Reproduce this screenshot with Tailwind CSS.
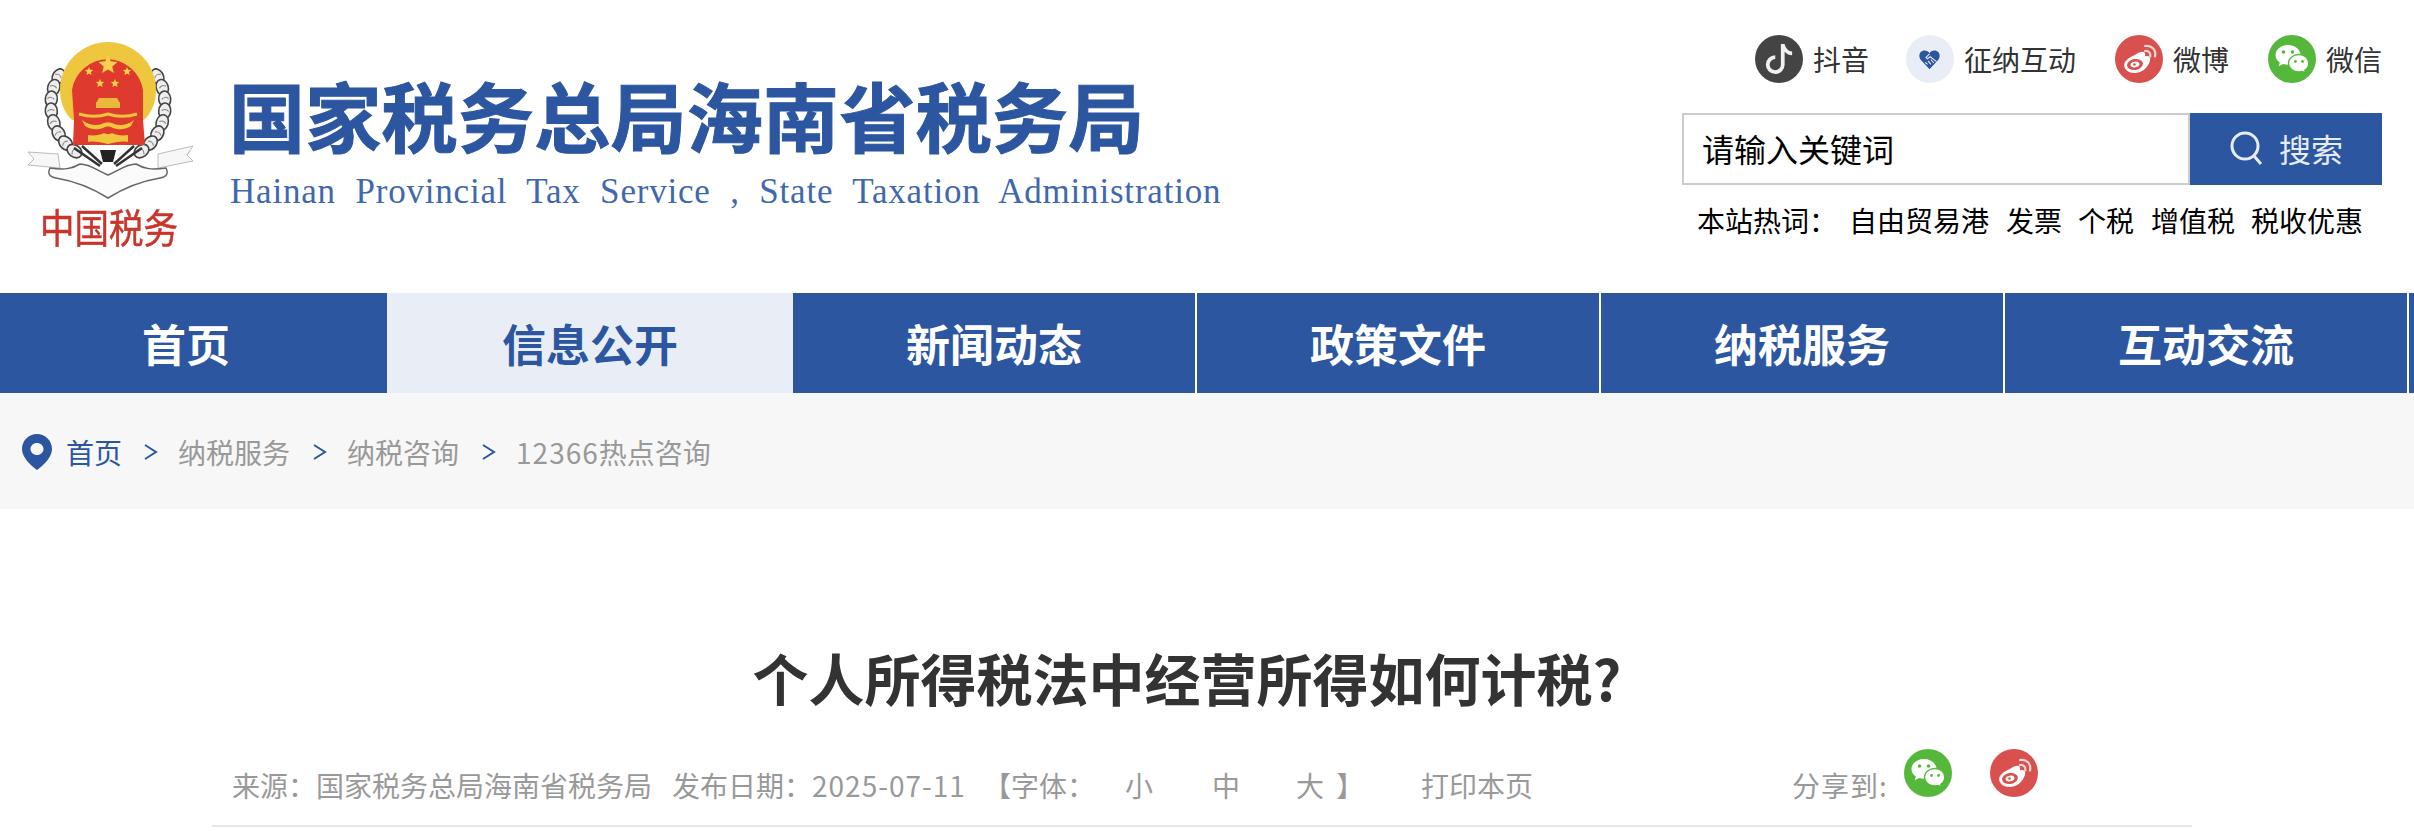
<!DOCTYPE html>
<html lang="en">
<head>
    <meta charset="UTF-8">
    <title>个人所得税法中经营所得如何计税?</title>
    <script src="https://cdn.jsdelivr.net/npm/@tailwindcss/browser@4"></script>
</head>
<body class="bg-white h-[831px] overflow-hidden font-['Noto_Sans_CJK_SC','Liberation_Sans',sans-serif]">
    <!-- shared icons -->
    <svg class="hidden" xmlns="http://www.w3.org/2000/svg">
        <symbol id="icon-weibo" viewBox="0 0 48 48">
            <circle cx="24" cy="24" r="24" fill="#d9514f"/>
            <path d="M20 20c4-3 8-4 9.500-2.500 1 1 .8 2.500.2 4 3-1 5.500-.2 5.500 2.500 0 5-6.500 14-15 14-7 0-11-3.500-11-8 0-3.500 4-7.500 10.800-10z" fill="#fff"/>
            <ellipse cx="20" cy="29.500" rx="8" ry="5.500" fill="#d9514f" transform="rotate(-10 20 29.500)"/>
            <ellipse cx="20" cy="29.500" rx="4.500" ry="2.800" fill="#fff" transform="rotate(-10 20 29.500)"/>
            <circle cx="19.500" cy="29.500" r="1.300" fill="#d9514f"/>
            <path d="M30 16c3.500-.8 6 2 5.200 5.500M30 11c6.500-1.200 11.500 4 10 10.500" fill="none" stroke="#f8d5d4" stroke-width="2.200" stroke-linecap="round"/>
        </symbol>
        <symbol id="icon-wechat" viewBox="0 0 48 48">
            <circle cx="24" cy="24" r="24" fill="#55b83a"/>
            <path d="M20 10c-7 0-12.500 4.500-12.500 10 0 3 1.500 5.500 4.300 7.500l-1 3.800 4.200-2.300c1.700.5 3.300.8 5 .8 7 0 12.500-4.500 12.500-9.800S27 10 20 10z" fill="#fff"/>
            <circle cx="15.500" cy="17" r="1.800" fill="#55b83a"/>
            <circle cx="24.500" cy="17" r="1.800" fill="#55b83a"/>
            <path d="M31 19.500c-5.800 0-10.500 3.800-10.500 8.700s4.700 8.700 10.500 8.700c1.300 0 2.400-.2 3.500-.5l3 1.800-.8-3c2.500-1.600 4-4.200 4-7 0-4.900-4.200-8.700-9.700-8.700z" fill="#fff" stroke="#55b83a" stroke-width="1.300"/>
            <circle cx="27.500" cy="26.500" r="1.400" fill="#55b83a"/>
            <circle cx="34.500" cy="26.500" r="1.400" fill="#55b83a"/>
        </symbol>
    </svg>

    <header class="h-[293px] flex justify-between">
        <div class="flex">
            <!-- emblem -->
            <svg class="ml-[20px] mt-[35px] w-[180px] h-[225px] shrink-0 blur-[0.4px]" viewBox="20 35 180 225" xmlns="http://www.w3.org/2000/svg">
                <defs>
                    <g id="leaf">
                        <ellipse cx="51" cy="105" rx="6" ry="8" fill="#eeeeee" stroke="#444" stroke-width="1.600"/>
                        <path d="M47 105c2-2 5-2 7 0" fill="none" stroke="#888" stroke-width="1.200"/>
                    </g>
                    <g id="wreath-side">
                        <use href="#leaf" transform="rotate(30 108 105)"/>
                        <use href="#leaf" transform="rotate(18 108 105)"/>
                        <use href="#leaf" transform="rotate(6 108 105)"/>
                        <use href="#leaf" transform="rotate(-6 108 105)"/>
                        <use href="#leaf" transform="rotate(-18 108 105)"/>
                        <use href="#leaf" transform="rotate(-30 108 105)"/>
                        <use href="#leaf" transform="rotate(-42 108 105)"/>
                        <use href="#leaf" transform="rotate(-54 108 105)"/>
                        <path d="M74 148l26 18M82 146l20 18" stroke="#333" stroke-width="2.500"/>
                    </g>
                </defs>
                <path d="M58 154L28 152l6 7-6 6 32 3zM158 154l35-8-6 9 6 6-35 7z" fill="#f7f7f7" stroke="#bbb" stroke-width="1"/>
                <use href="#wreath-side"/>
                <use href="#wreath-side" transform="translate(216 0) scale(-1 1)"/>
                <path d="M50 168c-3 6 0 9 6 10 18 3 36 10 52 20 16-10 34-17 52-20 6-1 9-4 6-10-14 2-22 1-30-4-10 0-18 7-28 11-10-4-18-11-28-11-8 5-16 6-30 4z" fill="#fbfbfb" stroke="#666" stroke-width="1.500"/>
                <path d="M100 150h16l-3 12h-10z" fill="#222"/>
                <path d="M60 90a48 48 0 0 1 96 0c0 12-4 22-12 30l-72 0c-8-8-12-18-12-30z" fill="#efc73f"/>
                <path d="M72 90a36 37 0 0 1 71 0v30l2 25H73l1-25z" fill="#de3a2e"/>
                <path d="M108 55l2.700 6.300 6.800.6-5.200 4.500 1.600 6.600-5.900-3.500-5.900 3.500 1.600-6.600-5.200-4.500 6.800-.6z" fill="#f7d24a"/>
                <path d="M89 67l1.200 2.800 3 .3-2.300 2 .7 3-2.600-1.600-2.600 1.600.7-3-2.300-2 3-.3zM127 67l1.200 2.800 3 .3-2.300 2 .7 3-2.600-1.600-2.600 1.600.7-3-2.300-2 3-.3zM100 79l1.200 2.800 3 .3-2.300 2 .7 3-2.600-1.600-2.600 1.600.7-3-2.300-2 3-.3zM115 79l1.200 2.800 3 .3-2.300 2 .7 3-2.600-1.600-2.600 1.600.7-3-2.300-2 3-.3z" fill="#f7d24a"/>
                <path d="M99 98h18l3 5v5H96v-5z" fill="#e8b93c"/>
                <path d="M79 114c10 3 20 3 29 0 9 3 19 3 29 0" fill="none" stroke="#f1c63d" stroke-width="3"/>
                <path d="M82 120c6 5 14 6 20 4 2-2 10-2 12 0 6 2 14 1 20-4l-3 6c-6 4-13 4-18 2-4-2-6-2-10 0-5 2-12 2-18-2z" fill="#f1c63d"/>
                <path d="M88 135c6 1 12 0 16-2 2 1.500 6 1.500 8 0 4 2 10 3 16 2v7c-6-1-12 0-20 2-8-2-14-3-20-2z" fill="#f1c63d"/>
                <text x="40" y="243" textLength="138" lengthAdjust="spacingAndGlyphs" font-size="40" fill="#c9352c" stroke="#c9352c" stroke-width=".5">中国税务</text>
            </svg>
            <div class="ml-[29px]">
                <h2 class="mt-[66px] h-[96px] flex items-center text-[76px] leading-none tracking-[0.3px] font-bold text-[#2c56a0] [-webkit-text-stroke:1px_#2c56a0]">国家税务总局海南省税务局</h2>
                <p class="mt-[10px] ml-[1px] text-[35px] leading-[40px] tracking-[0.8px] [word-spacing:10px] whitespace-nowrap text-[#3f68ae] font-['Liberation_Serif',serif]">Hainan Provincial Tax Service , State Taxation Administration</p>
            </div>
        </div>

        <div class="w-[700px] pr-[32px] flex flex-col items-end">
            <div class="mt-[35px] h-[48px] flex items-center text-[28px] text-[#333]">
                <span class="w-[48px] h-[48px] rounded-full bg-[#444] flex items-center justify-center">
                    <svg class="w-[30px] h-[30px]" viewBox="0 0 16 16" fill="#f0f0f0"><path d="M9 0h1.980c.144.715.540 1.617 1.235 2.512C12.895 3.389 13.797 4 15 4v2c-1.753 0-3.070-.814-4-1.829V11a5 5 0 1 1-5-5v2a3 3 0 1 0 3 3V0Z"/></svg>
                </span>
                <span class="ml-[10px]">抖音</span>
                <span class="ml-[37px] w-[48px] h-[48px] rounded-full bg-[#e9eef6] flex items-center justify-center">
                    <svg class="w-[23px] h-[21px]" viewBox="0 0 32 30">
                        <path d="M16 29L4 16C-1 10 2 2 9 2c3 0 5.500 1.500 7 4 1.500-2.500 4-4 7-4 7 0 10 8 5 14z" fill="#2c56a0"/>
                        <path d="M16 7l-5 5 2 2 4-3 9 7M10 19l3 3M14 17l4 5M18 15l4 5" fill="none" stroke="#e9eef6" stroke-width="1.600"/>
                    </svg>
                </span>
                <span class="ml-[10px]">征纳互动</span>
                <svg class="ml-[39px] w-[48px] h-[48px]"><use href="#icon-weibo"/></svg>
                <span class="ml-[10px]">微博</span>
                <svg class="ml-[39px] w-[48px] h-[48px]"><use href="#icon-wechat"/></svg>
                <span class="ml-[10px]">微信</span>
            </div>
            <form class="mt-[30px] w-[700px] h-[72px] flex">
                <div class="w-[508px] border-2 border-[#cccccc] pl-[18px] pb-[2px] flex items-center text-[32px] text-black">请输入关键词</div>
                <button type="button" class="w-[192px] bg-[#2c56a0] flex items-center pl-[39px] pb-[2px] text-[32px] text-[#e6ecf6]">
                    <svg class="w-[34px] h-[34px]" viewBox="0 0 34 34" fill="none" stroke="#e6ecf6" stroke-width="3"><circle cx="16" cy="15" r="13"/><path d="M25 25l7 8"/></svg>
                    <span class="ml-[16px]">搜索</span>
                </button>
            </form>
            <div class="mt-[15px] w-[700px] pl-[15px] h-[40px] flex items-center text-[28px] text-black">
                <span class="w-[152px]">本站热词：</span>
                <a>自由贸易港</a>
                <a class="ml-[17px]">发票</a>
                <a class="ml-[16px]">个税</a>
                <a class="ml-[17px]">增值税</a>
                <a class="ml-[16px]">税收优惠</a>
            </div>
        </div>
    </header>

    <nav class="h-[100px] bg-[#2c56a0] text-white text-[44px] font-bold">
        <ul class="-ml-[17px] flex h-full">
            <li class="w-[404px] pl-[2px] flex items-center justify-center">首页</li>
            <li class="w-[406px] flex items-center justify-center bg-[#e9eef6] text-[#2c56a0]">信息公开</li>
            <li class="w-[404px] border-r-2 border-white flex items-center justify-center">新闻动态</li>
            <li class="w-[404px] border-r-2 border-white flex items-center justify-center">政策文件</li>
            <li class="w-[404px] border-r-2 border-white flex items-center justify-center">纳税服务</li>
            <li class="w-[404px] border-r-2 border-white flex items-center justify-center">互动交流</li>
        </ul>
    </nav>

    <div class="h-[116px] bg-[#f7f7f7] pl-[22px] pt-[2px] flex items-center text-[28px] text-[#999]">
        <svg class="w-[30px] h-[36px]" viewBox="0 0 30 36"><path fill-rule="evenodd" d="M15 0c8.300 0 15 6.700 15 15 0 8-8 16-15 21C8 31 0 23 0 15 0 6.700 6.700 0 15 0zm0 9c-3.600 0-6.500 2.700-6.500 6s2.900 6 6.500 6 6.500-2.700 6.500-6-2.900-6-6.500-6z" fill="#2c56a0"/></svg>
        <a class="ml-[14px] text-[#2c56a0]">首页</a>
        <svg class="ml-[21px] w-[15px] h-[20px]" viewBox="0 0 15 20" fill="none" stroke="#2c56a0" stroke-width="2"><path d="M2 3l11 7-11 7"/></svg>
        <a class="ml-[20px]">纳税服务</a>
        <svg class="ml-[22px] w-[15px] h-[20px]" viewBox="0 0 15 20" fill="none" stroke="#2c56a0" stroke-width="2"><path d="M2 3l11 7-11 7"/></svg>
        <a class="ml-[20px]">纳税咨询</a>
        <svg class="ml-[22px] w-[15px] h-[20px]" viewBox="0 0 15 20" fill="none" stroke="#2c56a0" stroke-width="2"><path d="M2 3l11 7-11 7"/></svg>
        <a class="ml-[20px]"><span class="tracking-[1px]">12366</span>热点咨询</a>
    </div>

    <main class="w-[1980px] ml-[212px]">
        <h1 class="mt-[134px] h-[68px] pr-[30px] flex items-center justify-center text-[56px] leading-none font-bold text-[#333]">个人所得税法中经营所得如何计税?</h1>
        <div class="mt-[34px] h-[82px] pl-[20px] flex items-center text-[28px] text-[#999] border-b-2 border-[#e5e5e5]">
            <span class="w-[440px]">来源：国家税务总局海南省税务局</span>
            <span class="w-[311px]">发布日期：<span class="tracking-[1px]">2025-07-11</span></span>
            <span class="w-[142px]">【字体：</span>
            <a class="w-[87px]">小</a>
            <a class="w-[84px]">中</a>
            <a class="w-[125px] [word-spacing:6px]">大 】</a>
            <a class="w-[371px]">打印本页</a>
            <span class="w-[112px] tracking-[1px]">分享到:</span>
            <svg class="w-[48px] h-[48px] -mt-[24px]"><use href="#icon-wechat"/></svg>
            <svg class="ml-[38px] w-[48px] h-[48px] -mt-[24px]"><use href="#icon-weibo"/></svg>
        </div>
    </main>
</body>
</html>
